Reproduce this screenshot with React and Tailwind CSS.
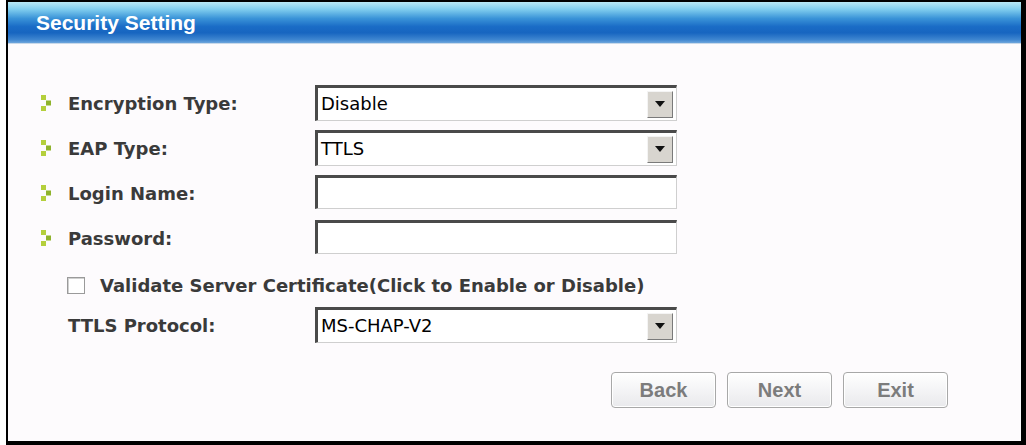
import React from 'react'

const LABEL = 'font-["DejaVu_Sans",sans-serif] font-bold text-[18px] text-[#3a3a3a]'

// green pixel chevron used as a row bullet
function Bullet() {
  return (
    <svg width="11" height="16" viewBox="0 0 11 16" aria-hidden="true" className="shrink-0">
      <rect x="0" y="0" width="5" height="5" fill="#b4cf3c" />
      <rect x="5" y="5.5" width="5" height="5" fill="#8fb32c" />
      <rect x="0" y="11" width="5" height="5" fill="#b4cf3c" />
    </svg>
  )
}

function Sunken({ children, className = '' }) {
  return (
    <div
      className={`w-[362px] flex items-center bg-white border-t-[3px] border-l-[3px] border-t-[#4a4a4a] border-l-[#4a4a4a] border-r border-b border-r-[#cfcfcf] border-b-[#cfcfcf] ${className}`}
    >
      {children}
    </div>
  )
}

function Select({ value }) {
  return (
    <Sunken className="h-[36px] pr-[3px]">
      <span className='flex-1 pl-[3px] font-["DejaVu_Sans",sans-serif] text-[18px] text-black leading-none'>
        {value}
      </span>
      <div className="w-[26px] h-[27px] flex items-center justify-center bg-[#d8d5cf] border border-t-[#f4f4f4] border-l-[#f4f4f4] border-r-[#7a7a7a] border-b-[#7a7a7a]">
        <svg width="10" height="6" viewBox="0 0 10 6" aria-hidden="true">
          <path d="M0 0h10L5 6z" fill="#111" />
        </svg>
      </div>
    </Sunken>
  )
}

function Row({ label, children }) {
  return (
    <div className="h-[45px] flex items-start pl-[33px]">
      <div className="h-[36px] flex items-center gap-[16px] w-[274px]">
        <Bullet />
        <span className={LABEL}>{label}</span>
      </div>
      {children}
    </div>
  )
}

function Button({ children }) {
  return (
    <button className='w-[105px] h-[36px] rounded-[4px] border border-[#a8a8a8] bg-gradient-to-b from-white to-[#e9e9ec] shadow-[inset_0_0_0_1px_#ffffff] font-["Liberation_Sans",sans-serif] font-bold text-[20px] text-[#7c7c7c]'>
      {children}
    </button>
  )
}

export default function App() {
  return (
    <div className="w-[1026px] h-[445px] bg-white">
      <div className="ml-[6px] w-[1020px] h-[445px] flex flex-col bg-[#fdfbfd] border-t-2 border-l-2 border-r-[5px] border-b-4 border-black">
        {/* title bar */}
        <div className="h-[41px] flex items-center pl-[28px] bg-[linear-gradient(to_bottom,#b9e8f5_0%,#7fcdee_18%,#3a93d8_40%,#1a6cc6_60%,#1765c0_75%,#3f86d0_92%,#6fa6dc_100%)]">
          <span className='font-["Liberation_Sans",sans-serif] font-bold text-[21px] text-white leading-none'>
            Security Setting
          </span>
        </div>
        <div className="h-px bg-[#c9d9ea]" />

        <div className="pt-[41px] flex flex-col">
          <Row label="Encryption Type:">
            <Select value="Disable" />
          </Row>
          <Row label="EAP Type:">
            <Select value="TTLS" />
          </Row>
          <Row label="Login Name:">
            <Sunken className="h-[34px]" />
          </Row>
          <Row label="Password:">
            <Sunken className="h-[34px]" />
          </Row>

          <div className="mt-[11px] h-[18px] flex items-center pl-[59px] gap-[15px]">
            <div className="w-[18px] h-[17px] bg-white border border-[#9a9a9a] shadow-[inset_1px_1px_0_#d0d0d0]" />
            <span className={LABEL}>Validate Server Certificate(Click to Enable or Disable)</span>
          </div>

          <div className="mt-[13px] flex items-center pl-[60px]">
            <span className={`${LABEL} w-[247px]`}>TTLS Protocol:</span>
            <Select value="MS-CHAP-V2" />
          </div>

          <div className="mt-[29px] flex justify-end gap-[11px] pr-[73px]">
            <Button>Back</Button>
            <Button>Next</Button>
            <Button>Exit</Button>
          </div>
        </div>
      </div>
    </div>
  )
}
